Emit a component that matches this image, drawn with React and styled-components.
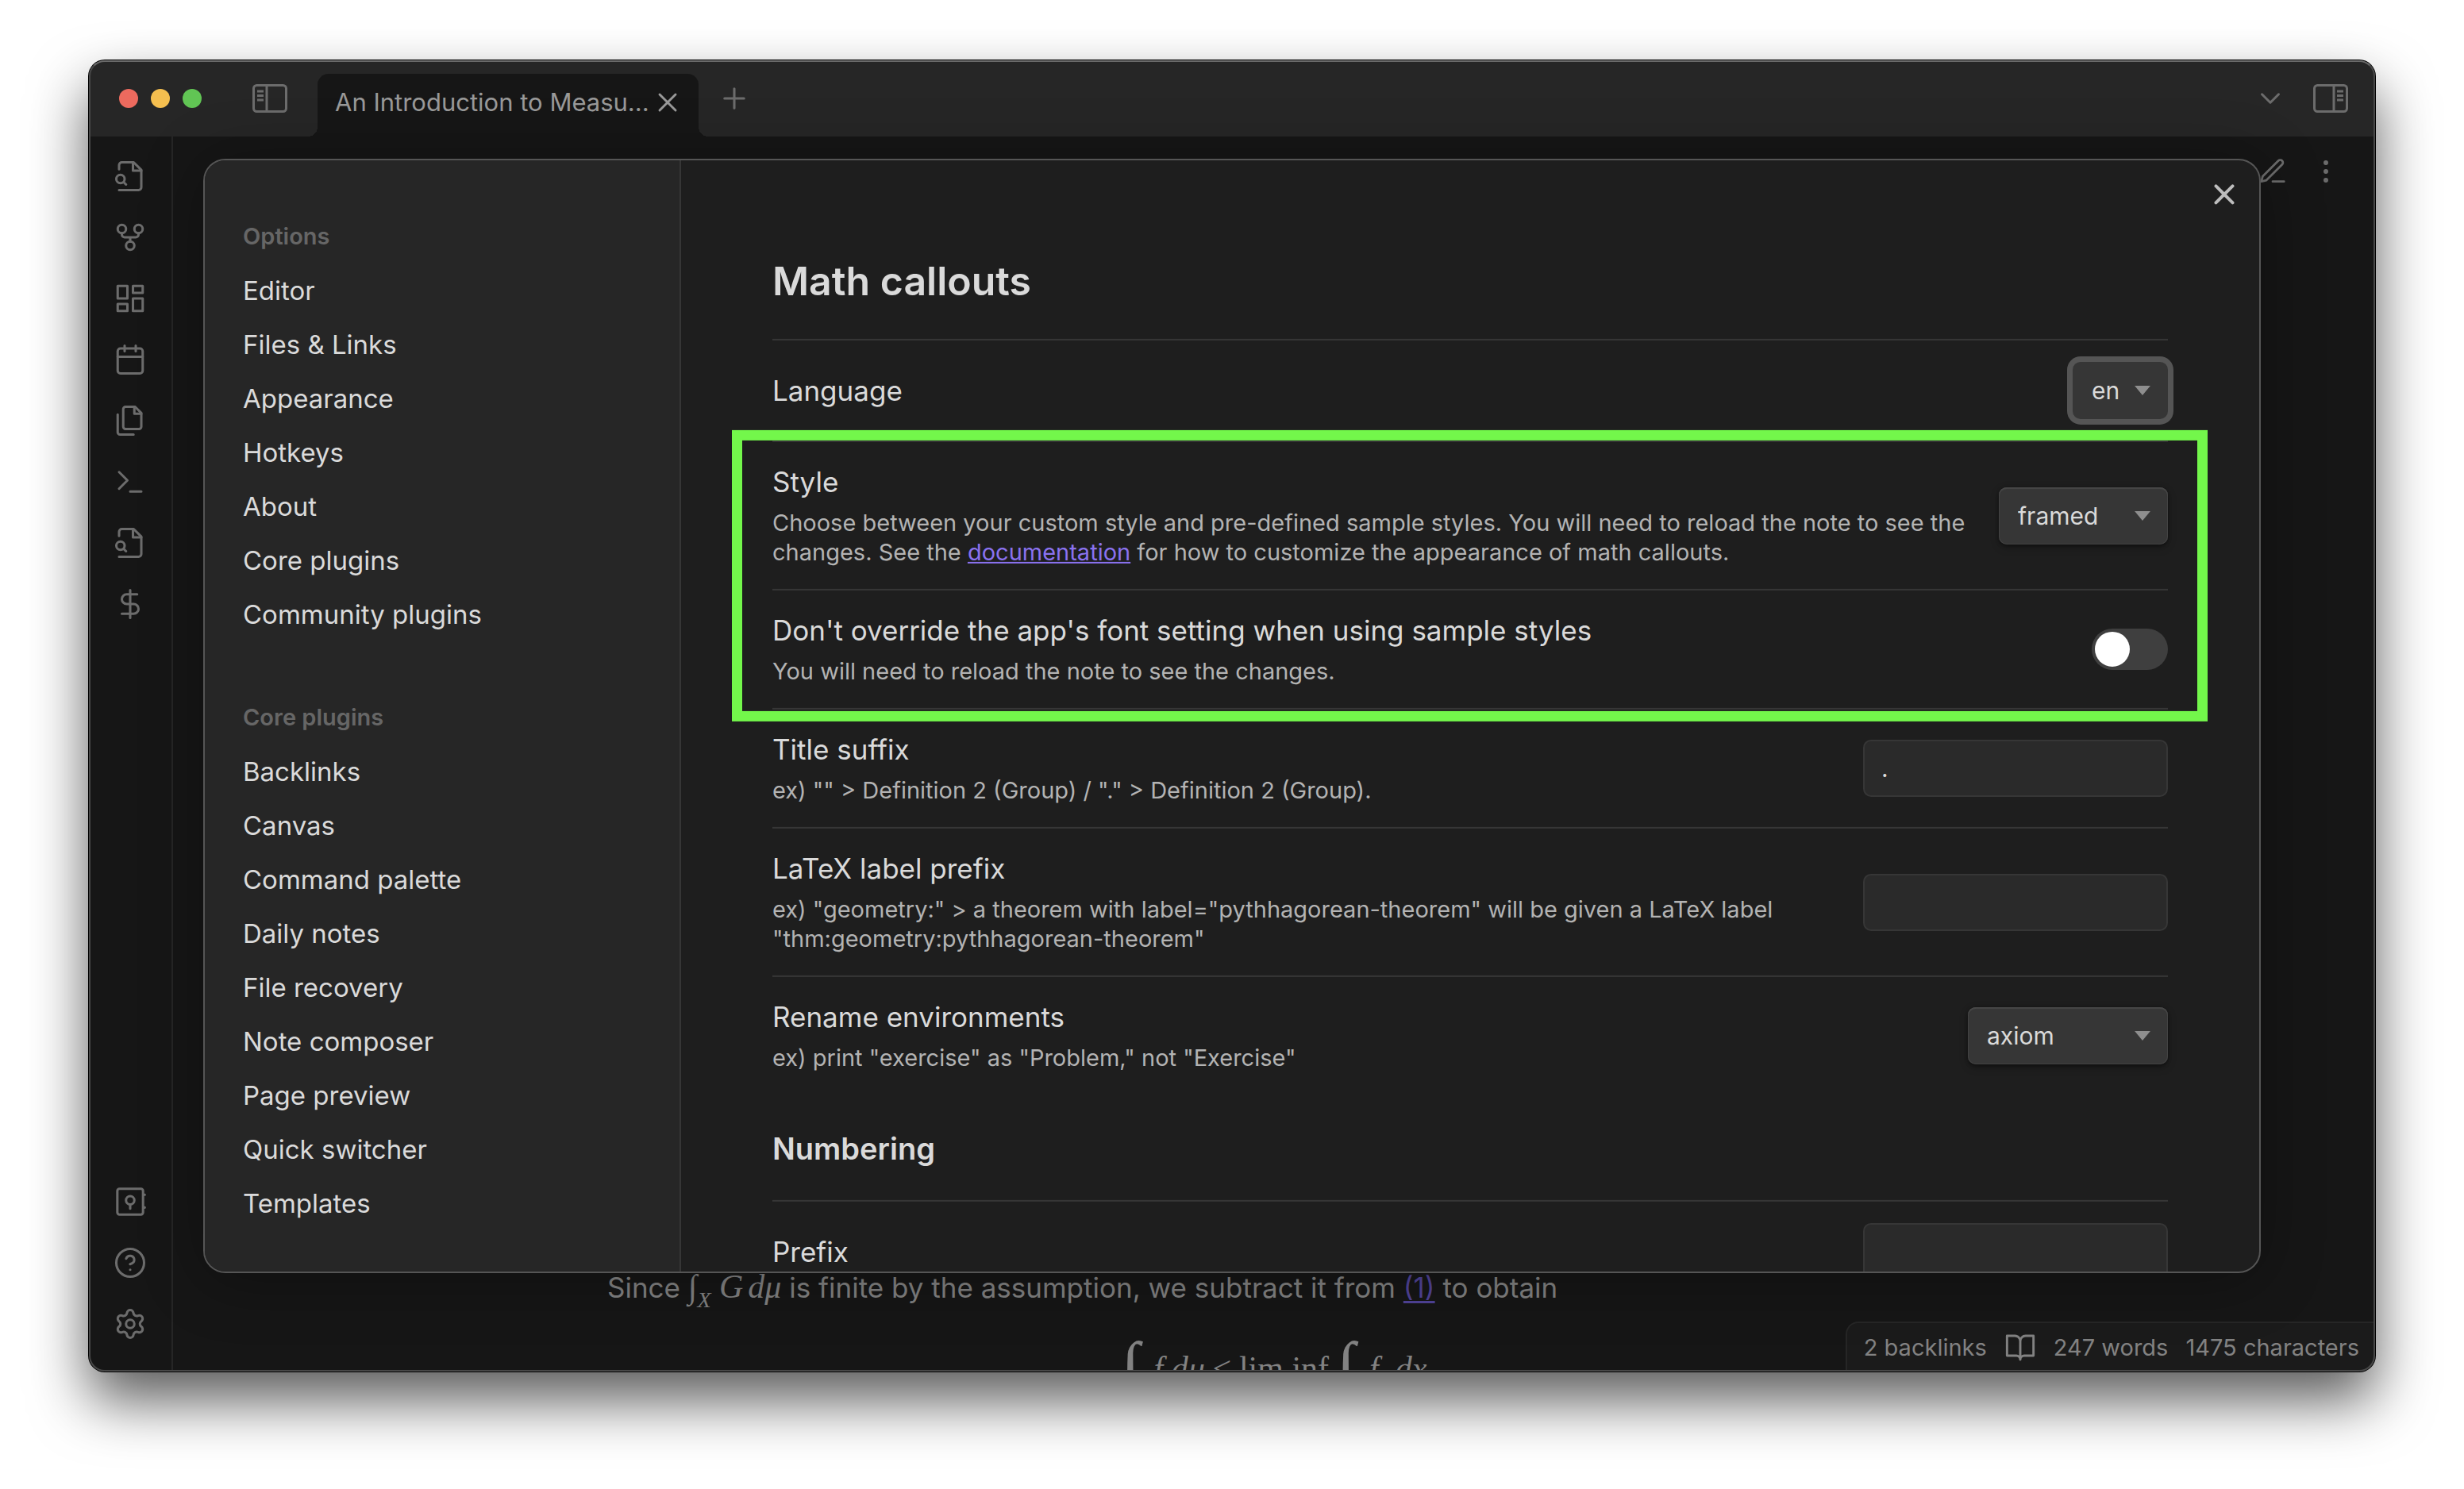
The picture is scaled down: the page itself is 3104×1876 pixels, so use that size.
import React from "react";
import styled, { createGlobalStyle } from "styled-components";

const Global = createGlobalStyle`
  *, *::before, *::after { box-sizing: border-box; }
  body { margin: 0; background: #fff; color: #dadada; font-family: Inter, Roboto, sans-serif; }
  h1, h2, h3, p, ul { margin: 0; padding: 0; }
  ul { list-style: none; }
  button, select, input { font: inherit; color: inherit; }
`;

/* ---------- window frame ---------- */
const Desktop = styled.div`
  display: flex;
  height: 100vh;
  padding: 76px 112px 148px;
  overflow: hidden;
`;
const Window = styled.div`
  position: relative;
  flex: 1;
  display: flex;
  flex-direction: column;
  min-width: 0;
  border-radius: 20px;
  background: #161616;
  box-shadow: 0 0 0 1px #000, 0 36px 72px rgba(0, 0, 0, 0.65);
  &::after {
    content: "";
    position: absolute;
    inset: 0;
    border-radius: inherit;
    border: 2px solid #484848;
    border-top-color: #6a6a6a;
    pointer-events: none;
  }
`;
const TitleBar = styled.header`
  display: flex;
  align-items: center;
  height: 96px;
  padding: 0 34px 0 38px;
  background: #262626;
  border-radius: 20px 20px 0 0;
  color: #6c6c6c;
`;
const Lights = styled.div`
  display: flex;
  gap: 16px;
  margin-right: 64px;
`;
const Light = styled.button`
  width: 24px;
  height: 24px;
  padding: 0;
  border: 0;
  border-radius: 50%;
  background: ${(p) => p.$color};
`;
const IconButton = styled.button`
  display: flex;
  align-items: center;
  justify-content: center;
  padding: 0;
  border: 0;
  background: none;
  color: inherit;
`;
const Tab = styled.div`
  position: relative;
  align-self: flex-end;
  display: flex;
  align-items: center;
  justify-content: space-between;
  width: 480px;
  height: 79px;
  margin: 0 24px 0 38px;
  padding: 0 19px 8px 22px;
  border-radius: 14px 14px 0 0;
  background: #161616;
  color: #999;
  font-size: 31px;
  &::before, &::after {
    content: "";
    position: absolute;
    bottom: 0;
    width: 12px;
    height: 12px;
  }
  &::before { left: -12px; background: radial-gradient(circle at 0 0, #262626 12px, #161616 12px); }
  &::after { right: -12px; background: radial-gradient(circle at 100% 0, #262626 12px, #161616 12px); }
`;
const TitleBarEnd = styled.div`
  display: flex;
  align-items: center;
  gap: 33px;
  margin-left: auto;
`;
const Body = styled.div`
  flex: 1;
  display: flex;
  min-height: 0;
`;
const Ribbon = styled.nav`
  display: flex;
  flex-direction: column;
  justify-content: space-between;
  width: 106px;
  padding: 15px 0 26px;
  border-right: 2px solid #262626;
  color: #6c6c6c;
`;
const RibbonGroup = styled.div`
  display: flex;
  flex-direction: column;
  gap: 8px;
  ${IconButton} { height: 69px; }
`;

/* ---------- note ---------- */
const Editor = styled.main`
  flex: 1;
  display: flex;
  flex-direction: column;
  min-width: 0;
  overflow: hidden;
  border-bottom-right-radius: 20px;
`;
const ViewHeader = styled.div`
  display: flex;
  align-items: center;
  justify-content: flex-end;
  gap: 29px;
  height: 88px;
  padding-right: 43px;
  color: #6c6c6c;
`;
const Note = styled.article`
  flex: 1;
  display: flex;
  flex-direction: column;
  justify-content: flex-end;
  width: 100%;
  max-width: 1680px;
  margin: 0 auto;
  color: #828282;
  font-size: 35px;
  line-height: 56px;
`;
const InlineMath = styled.span`
  font-family: "Liberation Serif", serif;
  font-size: 42px;
  line-height: 1;
  i + i { margin-left: 6px; }
  sub { font-size: 28px; font-style: italic; vertical-align: -12px; }
`;
const Equation = styled.div`
  display: flex;
  justify-content: center;
  height: 76px;
  padding-top: 22px;
  overflow: hidden;
  font-family: "Liberation Serif", serif;
  font-size: 42px;
  line-height: 100px;
  gap: 10px;
  white-space: pre;
`;
const BigIntegral = styled.i`
  font-size: 84px;
  line-height: 94px;
  margin-right: 8px;
`;
const NoteLink = styled.a`
  color: #51449a;
  text-underline-offset: 4px;
`;
const StatusBar = styled.footer`
  position: absolute;
  right: 0;
  bottom: 0;
  display: flex;
  align-items: center;
  height: 63px;
  gap: 22px;
  padding: 0 20px 0 21px;
  border: 2px solid #262626;
  border-width: 2px 0 0 2px;
  border-radius: 16px 0 20px 0;
  background: #1b1b1b;
  color: #828282;
  font-size: 29px;
`;

/* ---------- settings dialog ---------- */
const Modal = styled.section`
  position: absolute;
  z-index: 1;
  top: 50%;
  left: 50%;
  width: 90%;
  height: 85%;
  transform: translate(-50%, -50%);
  display: flex;
  overflow: hidden;
  border: 2px solid #555;
  border-radius: 28px;
  background: #1e1e1e;
  box-shadow: 0 8px 80px rgba(0, 0, 0, 0.3);
`;
const Sidebar = styled.nav`
  flex: none;
  width: 600px;
  padding: 62px 0 0 48px;
  overflow: hidden;
  border-right: 2px solid #363636;
  background: #262626;
`;
const NavGroup = styled.section`
  padding-bottom: 62px;
`;
const NavTitle = styled.h3`
  color: #666;
  font-size: 29px;
  font-weight: 600;
  line-height: 68px;
`;
const NavItem = styled.button`
  display: block;
  width: 100%;
  height: 68px;
  padding: 0;
  border: 0;
  background: none;
  font-size: 33px;
  text-align: left;
`;
const Content = styled.div`
  flex: 1;
  min-width: 0;
  padding: 116px 115px 0;
  overflow: hidden;
`;
const PageTitle = styled.h2`
  padding-bottom: 37px;
  font-size: 50px;
  font-weight: 600;
  line-height: 72px;
`;
const Heading = styled.h3`
  padding: 40px 0 37px;
  font-size: 38px;
  font-weight: 600;
  line-height: 56px;
`;
const Row = styled.div`
  display: flex;
  align-items: center;
  justify-content: space-between;
  gap: 32px;
  padding: 27px 0;
  border-top: 2px solid #363636;
`;
const RowName = styled.label`
  display: block;
  font-size: 35px;
  line-height: 46px;
`;
const RowText = styled.p`
  padding: 10px 0 1px;
  color: #b3b3b3;
  font-size: 29px;
  line-height: 37px;
`;
const DocLink = styled.a`
  color: #8a72f0;
`;
const Highlight = styled.div`
  position: relative;
  &::after {
    content: "";
    position: absolute;
    inset: -13px -50px -17px -51px;
    border: 13px solid #73f74b;
    pointer-events: none;
  }
`;
const TextInput = styled.input`
  flex: none;
  width: 384px;
  height: 72px;
  padding: 0 21px;
  border: 2px solid #363636;
  border-radius: 10px;
  outline: 0;
  background: #2a2a2a;
  font-size: 30px;
`;
const SelectBox = styled.div`
  position: relative;
  flex: none;
  width: ${(p) => p.$width}px;
  svg { position: absolute; right: 22px; top: 30px; pointer-events: none; }
`;
const Select = styled.select`
  display: block;
  width: 100%;
  height: 72px;
  padding: 0 44px 0 24px;
  appearance: none;
  border: 0;
  border-radius: 10px;
  outline: 0;
  background: #363636;
  font-size: 30px;
  box-shadow: ${(p) =>
    p.$focused
      ? "0 0 0 7px #555"
      : "inset 0 2px 1px #484848, inset 0 0 0 1px #434343, 0 2px 4px rgba(0,0,0,.4), 0 4px 12px rgba(0,0,0,.2)"};
`;
const Toggle = styled.input`
  flex: none;
  appearance: none;
  display: flex;
  align-items: center;
  width: 96px;
  height: 52px;
  margin: 0;
  padding: 0 4px;
  border-radius: 26px;
  background: #3f3f3f;
  &::before {
    content: "";
    width: 44px;
    height: 44px;
    border-radius: 50%;
    background: #fff;
  }
  &:checked { justify-content: flex-end; background: #8a72f0; }
`;
const CloseButton = styled(IconButton)`
  position: absolute;
  top: 22px;
  right: 23px;
  color: #bdbdbd;
`;

/* ---------- icons ---------- */
const Icon = ({ size = 42, stroke = 1.75, children }) => (
  <svg width={size} height={size} viewBox="0 0 24 24" fill="none" stroke="currentColor"
    strokeWidth={stroke} strokeLinecap="round" strokeLinejoin="round" aria-hidden="true">
    {children}
  </svg>
);
const FileSearch = () => (
  <Icon>
    <path d="M4 22h14a2 2 0 0 0 2-2V7.5L14.5 2H6a2 2 0 0 0-2 2v3" />
    <path d="M14 2v6h6" />
    <circle cx="5" cy="14" r="3" />
    <path d="m9 18-1.5-1.5" />
  </Icon>
);
const Fork = () => (
  <Icon>
    <circle cx="12" cy="18" r="3" /><circle cx="6" cy="6" r="3" /><circle cx="18" cy="6" r="3" />
    <path d="M18 9v1a2 2 0 0 1-2 2H8a2 2 0 0 1-2-2V9M12 12v3" />
  </Icon>
);
const Dashboard = () => (
  <Icon>
    <path d="M3 3h7v9H3zM14 3h7v5h-7zM14 12h7v9h-7zM3 16h7v5H3z" />
  </Icon>
);
const CalendarIcon = () => (
  <Icon>
    <rect x="3" y="4" width="18" height="18" rx="2" />
    <path d="M16 2v4M8 2v4M3 10h18" />
  </Icon>
);
const Files = () => (
  <Icon>
    <path d="M15.5 2H8.6c-.4 0-.8.2-1.1.5-.3.3-.5.7-.5 1.1v12.8c0 .4.2.8.5 1.1.3.3.7.5 1.1.5h9.8c.4 0 .8-.2 1.1-.5.3-.3.5-.7.5-1.1V6.5L15.5 2z" />
    <path d="M3 7.6v12.8c0 .4.2.8.5 1.1.3.3.7.5 1.1.5h9.8M15 2v5h5" />
  </Icon>
);
const Terminal = () => (<Icon><path d="m4 17 6-6-6-6M12 19h8" /></Icon>);
const Dollar = () => (
  <Icon><path d="M12 2v20M17 5H9.5a3.5 3.5 0 0 0 0 7h5a3.5 3.5 0 0 1 0 7H6" /></Icon>
);
const Vault = () => (
  <Icon>
    <rect x="2.75" y="2.75" width="18.5" height="18.5" rx="1.5" />
    <circle cx="12" cy="11" r="3" />
    <path d="M12 14v3M21.5 7h1M21.5 16.2h1" />
  </Icon>
);
const Help = () => (
  <Icon>
    <circle cx="12" cy="12" r="10" />
    <path d="M9.09 9a3 3 0 0 1 5.83 1c0 2-3 3-3 3M12 17h.01" />
  </Icon>
);
const Gear = () => (
  <Icon>
    <path d="M9.671 4.136a2.34 2.34 0 0 1 4.659 0 2.34 2.34 0 0 0 3.319 1.915 2.34 2.34 0 0 1 2.33 4.033 2.34 2.34 0 0 0 0 3.831 2.34 2.34 0 0 1-2.33 4.033 2.34 2.34 0 0 0-3.319 1.915 2.34 2.34 0 0 1-4.659 0 2.34 2.34 0 0 0-3.32-1.915 2.34 2.34 0 0 1-2.33-4.033 2.34 2.34 0 0 0 0-3.831A2.34 2.34 0 0 1 6.35 6.051a2.34 2.34 0 0 0 3.319-1.915" />
    <circle cx="12" cy="12" r="3" />
  </Icon>
);
const Cross = ({ size, stroke }) => (<Icon size={size} stroke={stroke}><path d="M18 6 6 18M6 6l12 12" /></Icon>);
const Plus = () => (<Icon><path d="M12 5v14M5 12h14" /></Icon>);
const Chevron = () => (<Icon><path d="m6 9 6 6 6-6" /></Icon>);
const Pen = () => (
  <Icon size={38}><path d="M12 20h9M16.5 3.5a2.12 2.12 0 0 1 3 3L7 19l-4 1 1-4z" /></Icon>
);
const Dots = () => (
  <Icon size={38}>
    <circle cx="12" cy="5" r="1" /><circle cx="12" cy="12" r="1" /><circle cx="12" cy="19" r="1" />
  </Icon>
);
const Book = () => (
  <Icon size={40}>
    <path d="M2 3h6a4 4 0 0 1 4 4v14a3 3 0 0 0-3-3H2zM22 3h-6a4 4 0 0 0-4 4v14a3 3 0 0 1 3-3h7z" />
  </Icon>
);
const PanelIcon = ({ side }) => (
  <svg width="44" height="36" viewBox="0 0 44 36" fill="none" stroke="currentColor" strokeWidth="3" aria-hidden="true">
    <rect x="1.5" y="1.5" width="41" height="33" rx="4" />
    {side === "left"
      ? <path d="M18 2v32M6 9h8M6 14.5h8M6 20h8" />
      : <path d="M26 2v32M30 9h8M30 14.5h8M30 20h8" />}
  </svg>
);
const Triangle = () => (
  <svg width="20" height="12" viewBox="0 0 20 12" aria-hidden="true"><path d="M0 0h20L10 12z" fill="#8e8e8e" /></svg>
);

/* ---------- parts ---------- */
const ribbonTop = [
  ["Search in file", FileSearch], ["Graph view", Fork], ["New canvas", Dashboard], ["Daily note", CalendarIcon],
  ["Templates", Files], ["Command palette", Terminal], ["Search theorems", FileSearch], ["Math", Dollar],
];
const ribbonBottom = [["Open another vault", Vault], ["Help", Help], ["Settings", Gear]];
const navGroups = [
  { title: "Options", items: ["Editor", "Files & Links", "Appearance", "Hotkeys", "About", "Core plugins", "Community plugins"] },
  {
    title: "Core plugins",
    items: ["Backlinks", "Canvas", "Command palette", "Daily notes", "File recovery", "Note composer", "Page preview", "Quick switcher", "Templates"],
  },
];

const RibbonButtons = ({ items }) => (
  <RibbonGroup>
    {items.map(([label, Glyph]) => (
      <IconButton key={label} type="button" aria-label={label}><Glyph /></IconButton>
    ))}
  </RibbonGroup>
);

const Setting = ({ id, name, desc, children }) => (
  <Row>
    <div>
      <RowName htmlFor={id}>{name}</RowName>
      {desc && <RowText>{desc}</RowText>}
    </div>
    {children}
  </Row>
);

const Dropdown = ({ id, width, value, focused }) => (
  <SelectBox $width={width}>
    <Select id={id} $focused={focused} defaultValue={value}>
      <option value={value}>{value}</option>
    </Select>
    <Triangle />
  </SelectBox>
);

export default function App() {
  return (
    <>
      <Global />
      <Desktop>
        <Window>
          <TitleBar>
            <Lights>
              <Light $color="#ed6a5e" type="button" aria-label="Close window" />
              <Light $color="#f5bf4f" type="button" aria-label="Minimize" />
              <Light $color="#61c554" type="button" aria-label="Zoom window" />
            </Lights>
            <IconButton type="button" aria-label="Toggle left sidebar"><PanelIcon side="left" /></IconButton>
            <Tab>
              An Introduction to Measu...
              <IconButton type="button" aria-label="Close tab"><Cross size={40} /></IconButton>
            </Tab>
            <IconButton type="button" aria-label="New tab"><Plus /></IconButton>
            <TitleBarEnd>
              <IconButton type="button" aria-label="Tab list"><Chevron /></IconButton>
              <IconButton type="button" aria-label="Toggle right sidebar"><PanelIcon side="right" /></IconButton>
            </TitleBarEnd>
          </TitleBar>
          <Body>
            <Ribbon>
              <RibbonButtons items={ribbonTop} />
              <RibbonButtons items={ribbonBottom} />
            </Ribbon>
            <Editor>
              <ViewHeader>
                <IconButton type="button" aria-label="Edit"><Pen /></IconButton>
                <IconButton type="button" aria-label="More options"><Dots /></IconButton>
              </ViewHeader>
              <Note>
                <p>
                  Since <InlineMath><i>∫</i><sub>X</sub> <i>G</i><i>dμ</i></InlineMath> is finite by the assumption, we
                  subtract it from <NoteLink href="#eq-1">(1)</NoteLink> to obtain
                </p>
                <Equation>
                  <BigIntegral>∫</BigIntegral><i>f dμ</i><span>≤</span><span>lim inf</span>
                  <BigIntegral>∫</BigIntegral><i>f  dx</i>
                </Equation>
              </Note>
            </Editor>
          </Body>
          <StatusBar>
            <span>2 backlinks</span>
            <Book />
            <span>247 words</span>
            <span>1475 characters</span>
          </StatusBar>
          <Modal role="dialog" aria-label="Settings">
            <Sidebar>
              {navGroups.map((group) => (
                <NavGroup key={group.title}>
                  <NavTitle>{group.title}</NavTitle>
                  <ul>
                    {group.items.map((item) => (
                      <li key={item}><NavItem type="button">{item}</NavItem></li>
                    ))}
                  </ul>
                </NavGroup>
              ))}
            </Sidebar>
            <Content>
              <PageTitle>Math callouts</PageTitle>
              <Setting id="language" name="Language">
                <Dropdown id="language" width={120} value="en" focused />
              </Setting>
              <Highlight>
                <Setting
                  id="style"
                  name="Style"
                  desc={
                    <>
                      Choose between your custom style and pre-defined sample styles. You will need to reload the note
                      to see the changes. See the <DocLink href="#documentation">documentation</DocLink> for how to
                      customize the appearance of math callouts.
                    </>
                  }
                >
                  <Dropdown id="style" width={213} value="framed" />
                </Setting>
                <Setting
                  id="font"
                  name="Don't override the app's font setting when using sample styles"
                  desc="You will need to reload the note to see the changes."
                >
                  <Toggle id="font" type="checkbox" role="switch" />
                </Setting>
              </Highlight>
              <Setting id="suffix" name="Title suffix" desc={'ex) "" > Definition 2 (Group) / "." > Definition 2 (Group).'}>
                <TextInput id="suffix" type="text" defaultValue="." />
              </Setting>
              <Setting
                id="latex"
                name="LaTeX label prefix"
                desc={'ex) "geometry:" > a theorem with label="pythhagorean-theorem" will be given a LaTeX label "thm:geometry:pythhagorean-theorem"'}
              >
                <TextInput id="latex" type="text" />
              </Setting>
              <Setting id="rename" name="Rename environments" desc={'ex) print "exercise" as "Problem," not "Exercise"'}>
                <Dropdown id="rename" width={252} value="axiom" />
              </Setting>
              <Heading>Numbering</Heading>
              <Setting id="prefix" name="Prefix">
                <TextInput id="prefix" type="text" />
              </Setting>
            </Content>
            <CloseButton type="button" aria-label="Close settings"><Cross stroke={2.25} /></CloseButton>
          </Modal>
        </Window>
      </Desktop>
    </>
  );
}
